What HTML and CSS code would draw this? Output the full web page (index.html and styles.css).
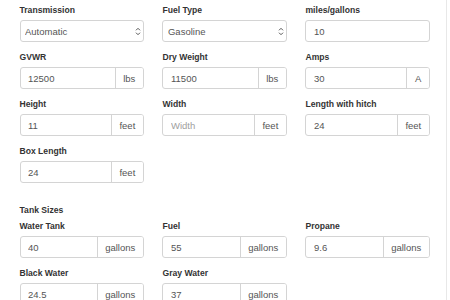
FILE: index.html
```html
<!DOCTYPE html>
<html>
<head>
<meta charset="utf-8">
<link rel="stylesheet" href="styles.css">
</head>
<body>
<div class="page">
  <div class="grid">
    <div class="field">
      <label class="label">Transmission</label>
      <div class="select-wrap">
        <select class="control select"><option>Automatic</option></select>
        <svg class="chev" width="6" height="9" viewBox="0 0 6 9"><path d="M1 3.3 L3 1.3 L5 3.3 M1 5.7 L3 7.7 L5 5.7" fill="none" stroke="#555" stroke-width="1"/></svg>
      </div>
    </div>
    <div class="field">
      <label class="label">Fuel Type</label>
      <div class="select-wrap">
        <select class="control select"><option>Gasoline</option></select>
        <svg class="chev" width="6" height="9" viewBox="0 0 6 9"><path d="M1 3.3 L3 1.3 L5 3.3 M1 5.7 L3 7.7 L5 5.7" fill="none" stroke="#555" stroke-width="1"/></svg>
      </div>
    </div>
    <div class="field">
      <label class="label">miles/gallons</label>
      <div class="group"><input class="control" value="10"></div>
    </div>

    <div class="field">
      <label class="label">GVWR</label>
      <div class="group"><input class="control" value="12500"><span class="addon">lbs</span></div>
    </div>
    <div class="field">
      <label class="label">Dry Weight</label>
      <div class="group"><input class="control" value="11500"><span class="addon">lbs</span></div>
    </div>
    <div class="field">
      <label class="label">Amps</label>
      <div class="group"><input class="control" value="30"><span class="addon">A</span></div>
    </div>

    <div class="field">
      <label class="label">Height</label>
      <div class="group"><input class="control" value="11"><span class="addon">feet</span></div>
    </div>
    <div class="field">
      <label class="label">Width</label>
      <div class="group"><input class="control" placeholder="Width"><span class="addon">feet</span></div>
    </div>
    <div class="field">
      <label class="label">Length with hitch</label>
      <div class="group"><input class="control" value="24"><span class="addon">feet</span></div>
    </div>

    <div class="field">
      <label class="label">Box Length</label>
      <div class="group"><input class="control" value="24"><span class="addon">feet</span></div>
    </div>
  </div>

  <div class="section-title">Tank Sizes</div>

  <div class="grid">
    <div class="field">
      <label class="label">Water Tank</label>
      <div class="group"><input class="control" value="40"><span class="addon">gallons</span></div>
    </div>
    <div class="field">
      <label class="label">Fuel</label>
      <div class="group"><input class="control" value="55"><span class="addon">gallons</span></div>
    </div>
    <div class="field">
      <label class="label">Propane</label>
      <div class="group"><input class="control" value="9.6"><span class="addon">gallons</span></div>
    </div>

    <div class="field">
      <label class="label">Black Water</label>
      <div class="group"><input class="control" value="24.5"><span class="addon">gallons</span></div>
    </div>
    <div class="field">
      <label class="label">Gray Water</label>
      <div class="group"><input class="control" value="37"><span class="addon">gallons</span></div>
    </div>
  </div>
</div>
</body>
</html>
```

FILE: styles.css
```css
html, body {
  margin: 0;
  padding: 0;
  background: #fff;
}
body {
  font-family: "Liberation Sans", Arial, Helvetica, sans-serif;
  color: #333;
  overflow: hidden;
}
.page {
  width: 447px;
  height: 300px;
  box-sizing: border-box;
  border-right: 1px solid #e8e8e8;
  padding: 4px 0 0 19.5px;
}
.grid {
  display: grid;
  grid-template-columns: repeat(3, 124.3px);
  column-gap: 18.7px;
}
.field {
  display: flex;
  flex-direction: column;
  margin-bottom: 9px;
}
.label {
  font-size: 8.6px;
  line-height: 12px;
  font-weight: bold;
  color: #333;
  margin-bottom: 4px;
}
.section-title {
  font-size: 8.6px;
  line-height: 12px;
  font-weight: bold;
  color: #333;
  margin: 12px 0 4px 0;
}
.group {
  display: flex;
  height: 22px;
  box-sizing: border-box;
  border: 1px solid #d4d4d4;
  border-radius: 3px;
  background: #fff;
  overflow: hidden;
}
.control {
  flex: 1;
  min-width: 0;
  border: none;
  outline: none;
  margin: 0;
  padding: 0 0 0 7.5px;
  font-family: "Liberation Sans", Arial, Helvetica, sans-serif;
  font-size: 9.5px;
  color: #555;
  background: transparent;
  height: 20px;
}
.control::placeholder {
  color: #a0a0a0;
}
.addon {
  display: flex;
  align-items: center;
  padding: 0 7.5px;
  border-left: 1px solid #d4d4d4;
  font-size: 9.5px;
  color: #555;
  background: #fff;
}
.select-wrap {
  position: relative;
  height: 22px;
}
.select {
  -webkit-appearance: none;
  appearance: none;
  width: 100%;
  height: 22px;
  box-sizing: border-box;
  border: 1px solid #d4d4d4;
  border-radius: 3px;
  padding-left: 4.5px;
  background: #fff;
}
.chev {
  position: absolute;
  right: 3px;
  top: 6.5px;
}
```
